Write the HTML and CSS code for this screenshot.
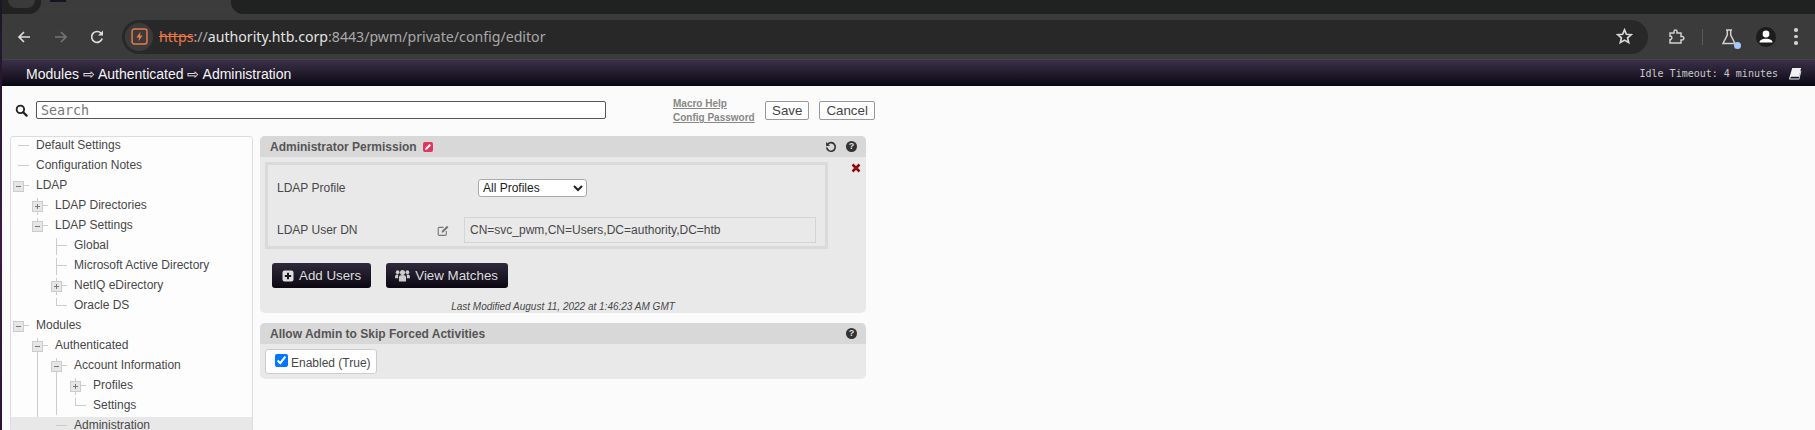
FILE: index.html
```html
<!DOCTYPE html>
<html lang="en">
<head>
  <meta charset="UTF-8" />
  <title>PWM Configuration Editor</title>
  <link rel="stylesheet" href="styles.css">
</head>
<body>
<div class="desktop">
  <div class="window">

    <!-- Browser chrome -->
    <div class="tabstrip">
      <div class="tab-gap"><div class="tab-prev"></div></div>
      <div class="tab-active"><div class="tab-favicon"></div></div>
      <div class="tab-rest"></div>
    </div>
    <div class="toolbar">
      <svg class="nav-icon nav-back" viewBox="0 0 16 16"><path d="M14 8H3M8 3 3 8l5 5" fill="none" stroke="currentColor" stroke-width="1.7"/></svg>
      <svg class="nav-icon nav-forward" viewBox="0 0 16 16"><path d="M2 8h11M8 3l5 5-5 5" fill="none" stroke="currentColor" stroke-width="1.7"/></svg>
      <svg class="nav-icon nav-reload" viewBox="0 0 16 16"><path d="M13.2 9.5A5.4 5.4 0 1 1 12 4.2" fill="none" stroke="currentColor" stroke-width="1.7"/><path d="M14 1.5V6.5H9z" fill="currentColor"/></svg>
      <div class="omnibox">
        <div class="site-pill">
          <svg class="site-icon" viewBox="0 0 16 16"><rect x="1" y="1" width="14" height="14" rx="2" fill="none" stroke="#e8794a" stroke-width="1.4"/><path d="M9 3.5 5 9h2.6L7 12.5 11 7H8.4z" fill="#e8794a"/></svg>
        </div>
        <div class="url"><span class="url-scheme">https</span><span class="url-path">://</span><span class="url-host">authority.htb.corp</span><span class="url-path">:8443/pwm/private/config/editor</span></div>
        <svg class="star" viewBox="0 0 16 16"><path d="M8 1.8l1.8 4.1 4.5.4-3.4 3 1 4.4L8 11.4l-3.9 2.3 1-4.4-3.4-3 4.5-.4z" fill="none" stroke="#d8d8d8" stroke-width="1.6"/></svg>
      </div>
      <svg class="tool-icon tool-ext" viewBox="0 0 18 18"><path d="M3 5h4V3.5a1.5 1.5 0 0 1 3 0V5h4v3.5h1.2a1.7 1.7 0 0 1 0 3.4H14V15H3v-3.5h1a2 2 0 0 0 0-3.3H3z" fill="none" stroke="#d0d0d0" stroke-width="1.5"/></svg>
      <div class="tool-sep"></div>
      <div class="tool-flask">
        <svg class="tool-icon" viewBox="0 0 18 18"><path d="M6 2h6M7.3 2v5L3 15.5h12L10.7 7V2" fill="none" stroke="#d0d0d0" stroke-width="1.5"/></svg>
        <span class="flask-dot"></span>
      </div>
      <div class="avatar">
        <svg viewBox="0 0 20 20"><circle cx="10" cy="7" r="3.4" fill="#fff"/><path d="M3.5 15.5c0-2.6 3-3.7 6.500-3.700s6.500 1.100 6.500 3.700z" fill="#fff"/></svg>
      </div>
      <div class="menu-dots"><span></span><span></span><span></span></div>
    </div>

    <!-- Page header -->
    <div class="header">
      <div class="header-title">Modules ⇨ Authenticated ⇨ Administration</div>
      <div class="idle">Idle Timeout: 4 minutes</div>
      <svg class="book" viewBox="0 0 14 14"><path d="M3.500 1H13l-2.200 9.500H2.200L1 12.500h9.500l2-8.500.8.500L11 13.500H1.200C.4 13.500 0 12.800.2 12z" fill="#f2f2f2"/></svg>
    </div>

    <!-- Search bar -->
    <div class="searchbar">
      <svg class="search-icon" viewBox="0 0 14 14"><circle cx="5.800" cy="5.800" r="4" fill="none" stroke="#222" stroke-width="2"/><path d="M8.800 8.800l3.700 3.700" stroke="#222" stroke-width="2.400" stroke-linecap="round"/></svg>
      <input class="search-input" type="text" placeholder="Search">
      <div class="search-links">
        <a href="#">Macro Help</a>
        <a href="#">Config Password</a>
      </div>
      <button class="plain-btn">Save</button>
      <button class="plain-btn">Cancel</button>
    </div>

    <div class="content">
      <!-- Navigation tree -->
      <div class="tree">
        <ul class="tree-root">
          <li><div class="row">Default Settings</div></li>
          <li><div class="row">Configuration Notes</div></li>
          <li><div class="row"><span class="exp"></span>LDAP</div>
            <ul>
              <li><div class="row"><span class="exp exp-plus"></span>LDAP Directories</div></li>
              <li><div class="row"><span class="exp"></span>LDAP Settings</div>
                <ul>
                  <li><div class="row">Global</div></li>
                  <li><div class="row">Microsoft Active Directory</div></li>
                  <li><div class="row"><span class="exp exp-plus"></span>NetIQ eDirectory</div></li>
                  <li><div class="row">Oracle DS</div></li>
                </ul>
              </li>
            </ul>
          </li>
          <li><div class="row"><span class="exp"></span>Modules</div>
            <ul>
              <li class="more"><div class="row"><span class="exp"></span>Authenticated</div>
                <ul>
                  <li><div class="row"><span class="exp"></span>Account Information</div>
                    <ul>
                      <li><div class="row"><span class="exp exp-plus"></span>Profiles</div></li>
                      <li><div class="row">Settings</div></li>
                    </ul>
                  </li>
                  <li class="more"><div class="row row-selected">Administration</div></li>
                </ul>
              </li>
            </ul>
          </li>
        </ul>
      </div>

      <!-- Settings -->
      <div class="editor">
        <div class="panel">
          <div class="panel-head">
            <span class="panel-title">Administrator Permission</span>
            <span class="modified-badge"><svg viewBox="0 0 10 10"><path d="M2 8l.5-2L6.500 2 8 3.500 4 7.500z" fill="#fff"/></svg></span>
            <svg class="revert" viewBox="0 0 14 14"><path d="M3.200 3.600A5 5 0 1 1 2 7.500" fill="none" stroke="#333" stroke-width="1.900"/><path d="M1.200 1.200l.2 4.800 4.600-.7z" fill="#333"/></svg>
            <span class="help">?</span>
          </div>
          <div class="panel-body">
            <div class="perm-line">
              <div class="perm-box">
                <div class="field field-profile">
                  <span class="field-label">LDAP Profile</span>
                  <select class="field-select"><option>All Profiles</option></select>
                </div>
                <div class="field field-dn">
                  <span class="field-label">LDAP User DN</span>
                  <svg class="field-edit" viewBox="0 0 14 14"><path d="M10 7.500V11a1.200 1.200 0 0 1-1.200 1.200H2.500A1.200 1.200 0 0 1 1.300 11V4.800A1.200 1.200 0 0 1 2.500 3.600H7" fill="none" stroke="#777" stroke-width="1.200"/><path d="M5 9.300l.4-2L10.800 2l1.600 1.600L7 9z" fill="#777"/></svg>
                  <div class="field-value">CN=svc_pwm,CN=Users,DC=authority,DC=htb</div>
                </div>
              </div>
              <svg class="delete" viewBox="0 0 10 10"><path d="M1.500 1.500l7 7M8.500 1.500l-7 7" stroke="#8a0f0f" stroke-width="2.600"/></svg>
            </div>
            <div class="actions">
              <button class="dark-btn">
                <svg viewBox="0 0 12 12"><rect x=".5" y=".5" width="11" height="11" rx="2" fill="#ddd"/><path d="M6 2.800v6.400M2.800 6h6.400" stroke="#1c1826" stroke-width="2"/></svg>
                Add Users
              </button>
              <button class="dark-btn">
                <svg class="users-icon" viewBox="0 0 16 13"><circle cx="8" cy="3.400" r="2.700" fill="#ccc"/><circle cx="2.800" cy="3" r="2" fill="#ccc"/><circle cx="13.200" cy="3" r="2" fill="#ccc"/><path d="M4.200 13V8.500c0-1.800 1.400-2.500 3.800-2.500s3.800.7 3.800 2.500V13zM.1 9.500V7.500c0-1.400 1-2 2.900-2l.7.100C3.200 6.400 3.300 7.500 3.300 9.500zM15.900 9.500V7.500c0-1.400-1-2-2.900-2l-.7.100c.5.800.4 1.900.4 3.900z" fill="#ccc"/></svg>
                View Matches
              </button>
            </div>
            <div class="modified-note">Last Modified August 11, 2022 at 1:46:23 AM GMT</div>
          </div>
        </div>

        <div class="panel">
          <div class="panel-head">
            <span class="panel-title">Allow Admin to Skip Forced Activities</span>
            <span class="help help-only">?</span>
          </div>
          <div class="panel-body">
            <label class="check-box"><input type="checkbox" checked><span>Enabled (True)</span></label>
          </div>
        </div>
      </div>
    </div>
  </div>
</div>
</body>
</html>
```

FILE: styles.css
```css
* {
  box-sizing: border-box;
}
html, body {
  margin: 0;
  height: 100%;
  overflow: hidden;
}
body {
  font-family: "Liberation Sans", Arial, sans-serif;
  font-size: 12px;
  color: #484848;
}
.desktop {
  height: 100vh;
  padding-left: 2px;
  background: linear-gradient(#1c1624, #3a1a4a 55%, #2a1436);
}
.window {
  height: 100%;
  display: flex;
  flex-direction: column;
  background: #fbfbfb;
  overflow: hidden;
}

/* browser chrome */
.tabstrip {
  height: 14px;
  display: flex;
  background: #3c3c3c;
  flex-shrink: 0;
}
.tab-gap {
  width: 39px;
  background: #212323;
  border-bottom-right-radius: 12px;
  padding-left: 6px;
}
.tab-prev {
  width: 27px;
  height: 8px;
  background: #3a3a3a;
  border-radius: 0 0 8px 8px;
}
.tab-active {
  width: 190px;
  padding-left: 9px;
}
.tab-favicon {
  width: 16px;
  height: 2px;
  background: #15151f;
}
.tab-rest {
  flex: 1;
  background: #202222;
  border-bottom-left-radius: 12px;
}
.toolbar {
  height: 46px;
  display: flex;
  align-items: center;
  background: #3b3b3b;
  border-bottom: 1px solid #444;
  flex-shrink: 0;
}
.nav-icon {
  width: 16px;
  height: 16px;
  color: #dcdcdc;
}
.nav-back {
  margin-left: 14px;
}
.nav-forward {
  margin-left: 21px;
  color: #737373;
}
.nav-reload {
  margin-left: 20px;
}
.omnibox {
  width: 1526px;
  height: 34px;
  margin-left: 17px;
  display: flex;
  align-items: center;
  background: #282828;
  border-radius: 17px;
}
.site-pill {
  width: 28px;
  height: 28px;
  margin-left: 3px;
  display: flex;
  align-items: center;
  justify-content: center;
  background: #3b3b3b;
  border-radius: 50%;
}
.site-icon {
  width: 17px;
  height: 17px;
}
.url {
  flex: 1;
  margin-left: 6px;
  font-family: "Noto Sans", sans-serif;
  font-size: 14.150px;
}
.url-scheme {
  color: #e8794a;
  text-decoration: line-through;
}
.url-host {
  color: #e3e3e3;
}
.url-path {
  color: #a8a8a8;
}
.star {
  width: 17px;
  height: 17px;
  margin-right: 15px;
}
.tool-icon {
  width: 18px;
  height: 18px;
  display: block;
}
.tool-ext {
  margin-left: 19px;
}
.tool-sep {
  width: 1px;
  height: 16px;
  margin-left: 17px;
  background: #5a5a5a;
}
.tool-flask {
  position: relative;
  margin-left: 17px;
}
.flask-dot {
  position: absolute;
  right: -3px;
  bottom: -3px;
  width: 7px;
  height: 7px;
  background: #a8c7fa;
  border-radius: 50%;
}
.avatar {
  width: 20px;
  height: 20px;
  margin-left: 18px;
  background: #1c1c1c;
  border-radius: 50%;
}
.avatar svg {
  display: block;
}
.menu-dots {
  margin-left: 18px;
  display: flex;
  flex-direction: column;
  gap: 3px;
}
.menu-dots span {
  width: 3.500px;
  height: 3.500px;
  background: #d0d0d0;
  border-radius: 50%;
}

/* page header */
.header {
  height: 26px;
  display: flex;
  align-items: center;
  padding-left: 24px;
  background: linear-gradient(#3a3048, #0b0813);
  flex-shrink: 0;
}
.header-title {
  flex: 1;
  padding-top: 1px;
  font-size: 14px;
  color: #f4f4f4;
}
.idle {
  font-family: "DejaVu Sans Mono", monospace;
  font-size: 10px;
  color: #c8c8c8;
}
.book {
  width: 13px;
  height: 13px;
  margin-left: 11px;
  margin-right: 13px;
}

/* search bar */
.searchbar {
  height: 50px;
  display: flex;
  align-items: flex-start;
  padding: 15px 0 0 13px;
  flex-shrink: 0;
}
.search-icon {
  width: 13px;
  height: 13px;
  margin: 3px 8px 0 0;
}
.search-input {
  width: 570px;
  height: 18px;
  padding: 0 4px;
  font-family: "DejaVu Sans Mono", monospace;
  font-size: 13.330px;
  background: #fff;
  border: 1px solid #555;
  border-radius: 2px;
  outline: none;
}
.search-input::placeholder {
  color: #777;
}
.search-links {
  width: 92px;
  margin-left: 67px;
  display: flex;
  flex-direction: column;
  gap: 3px;
  margin-top: -3px;
}
.search-links a {
  font-size: 10px;
  line-height: 11px;
  font-weight: bold;
  color: #888;
}
.plain-btn {
  height: 19px;
  padding: 0 6px;
  margin-right: 10px;
  font-family: "Liberation Sans", Arial, sans-serif;
  font-size: 13.330px;
  line-height: 15px;
  color: #444;
  background: #fff;
  border: 1px solid #999;
  border-radius: 2px;
}

/* layout below the search bar */
.content {
  flex: 1;
  display: flex;
  align-items: flex-start;
  padding-left: 8px;
  min-height: 0;
}

/* navigation tree */
.tree {
  width: 243px;
  height: 340px;
  flex-shrink: 0;
  background: #fdfdfd;
  border: 1px solid #ddd;
  border-radius: 3px;
  overflow: hidden;
}
.tree ul {
  list-style: none;
  margin: 0;
  padding: 0 0 0 19px;
}
.tree .tree-root {
  padding-left: 0;
  margin-top: -2px;
}
.tree ul ul li {
  position: relative;
}
.tree ul ul li::after {
  content: "";
  position: absolute;
  left: 7px;
  top: 3px;
  bottom: 0;
  width: 1px;
  background: #ccc;
}
.tree ul ul li:last-child::after {
  bottom: auto;
  height: 8px;
}
.tree ul ul li.more::after {
  height: auto;
  bottom: 0;
}
.row {
  position: relative;
  z-index: 1;
  height: 20px;
  line-height: 20px;
  padding-left: 25px;
  white-space: nowrap;
}
.row::before {
  content: "";
  position: absolute;
  left: 7px;
  top: 10px;
  width: 11px;
  height: 1px;
  background: #ccc;
}
.row-selected {
  height: 18px;
  margin: 2px 0 0 -100px;
  padding-left: 125px;
  line-height: 16px;
  background: #e8e8e8;
}
.row-selected::before {
  left: 107px;
  top: 8px;
}
.exp {
  position: absolute;
  z-index: 1;
  left: 2px;
  top: 6px;
  width: 11px;
  height: 11px;
  background: #e6e6e6;
  border: 1px solid #ccc;
}
.exp::before {
  content: "";
  position: absolute;
  left: 2px;
  top: 4px;
  width: 5px;
  height: 1px;
  background: #777;
}
.exp-plus::after {
  content: "";
  position: absolute;
  left: 4px;
  top: 2px;
  width: 1px;
  height: 5px;
  background: #777;
}

/* settings panels */
.editor {
  width: 606px;
  margin-left: 7px;
  display: flex;
  flex-direction: column;
  gap: 10px;
  flex-shrink: 0;
}
.panel {
  background: #e9e9e9;
  border-radius: 5px;
  overflow: hidden;
}
.panel-head {
  height: 21px;
  display: flex;
  align-items: center;
  padding: 0 9px 0 10px;
  background: #d8d8d8;
}
.panel-title {
  font-weight: bold;
  color: #555;
}
.modified-badge {
  width: 10px;
  height: 10px;
  margin-left: 6px;
  background: #e0355f;
  border-radius: 2px;
}
.modified-badge svg {
  display: block;
}
.revert {
  width: 12px;
  height: 12px;
  margin-left: auto;
}
.help {
  width: 11px;
  height: 11px;
  margin-left: 9px;
  font-size: 9px;
  line-height: 11px;
  font-weight: bold;
  text-align: center;
  color: #e0e0e0;
  background: #333;
  border-radius: 50%;
}
.help-only {
  margin-left: auto;
}
.panel-body {
  padding: 5px;
}
.perm-line {
  display: flex;
}
.perm-box {
  width: 563px;
  height: 87px;
  padding: 14px 0 0 9px;
  border: 3px solid #dadada;
}
.delete {
  width: 10px;
  height: 10px;
  margin: 1px 0 0 23px;
}
.field {
  display: flex;
  align-items: center;
}
.field-dn {
  margin-top: 20px;
}
.field-label {
  width: 160px;
}
.field-select {
  width: 109px;
  height: 18px;
  margin-left: 41px;
  padding: 0;
  font-family: "Liberation Sans", Arial, sans-serif;
  font-size: 12px;
  color: #222;
  background: #fff;
  border: 1px solid #aaa;
  border-radius: 3px;
}
.field-edit {
  width: 13px;
  height: 13px;
  margin-right: 14px;
}
.field-value {
  width: 352px;
  height: 26px;
  line-height: 24px;
  padding-left: 5px;
  border: 1px solid #d5d5d5;
}
.actions {
  display: flex;
  gap: 15px;
  margin: 14px 0 0 7px;
}
.dark-btn {
  height: 25px;
  display: flex;
  align-items: center;
  gap: 5px;
  padding: 0 10px;
  font-family: "Liberation Sans", Arial, sans-serif;
  font-size: 13.330px;
  color: #dcdcdc;
  background: linear-gradient(#302a3c, #0b0812);
  border: 0;
  border-radius: 3px;
}
.dark-btn svg {
  width: 12px;
  height: 12px;
}
.dark-btn .users-icon {
  width: 15px;
  height: 13px;
  margin-left: -1px;
}
.modified-note {
  height: 13px;
  margin: 12px 0 -5px;
  font-size: 10px;
  line-height: 13px;
  font-style: italic;
  text-align: center;
}
.check-box {
  width: 112px;
  height: 25px;
  display: flex;
  align-items: center;
  padding-left: 9px;
  background: #fff;
  border: 1px solid #ccc;
  border-radius: 3px;
}
.check-box input {
  width: 13px;
  height: 13px;
  margin: -3px 3px 0 0;
}
.check-box span {
  margin-top: 2px;
}
```
